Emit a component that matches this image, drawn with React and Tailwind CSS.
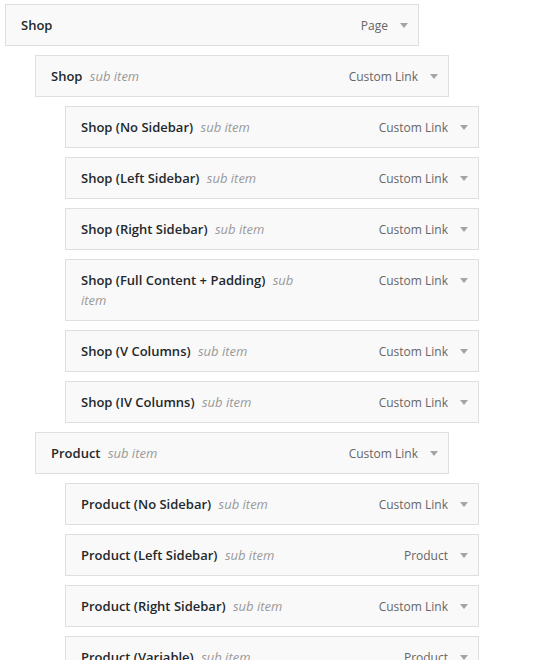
const items = [
  { title: "Shop", type: "Page", depth: 0, sub: false },
  { title: "Shop", type: "Custom Link", depth: 1, sub: true },
  { title: "Shop (No Sidebar)", type: "Custom Link", depth: 2, sub: true },
  { title: "Shop (Left Sidebar)", type: "Custom Link", depth: 2, sub: true },
  { title: "Shop (Right Sidebar)", type: "Custom Link", depth: 2, sub: true },
  { title: "Shop (Full Content + Padding)", type: "Custom Link", depth: 2, sub: true },
  { title: "Shop (V Columns)", type: "Custom Link", depth: 2, sub: true },
  { title: "Shop (IV Columns)", type: "Custom Link", depth: 2, sub: true },
  { title: "Product", type: "Custom Link", depth: 1, sub: true },
  { title: "Product (No Sidebar)", type: "Custom Link", depth: 2, sub: true },
  { title: "Product (Left Sidebar)", type: "Product", depth: 2, sub: true },
  { title: "Product (Right Sidebar)", type: "Custom Link", depth: 2, sub: true },
  { title: "Product (Variable)", type: "Product", depth: 2, sub: true },
];

const indent = ["ml-[5px]", "ml-[35px]", "ml-[65px]"];

function Arrow() {
  return (
    <svg width="8" height="5" viewBox="0 0 8 5" className="mt-[8px] shrink-0">
      <path d="M0 0 H8 L4 5 Z" fill="#a0a5aa" />
    </svg>
  );
}

function MenuItem({ item }) {
  return (
    <div
      className={`${indent[item.depth]} mt-[9px] first:mt-0 w-[414px] border border-[#dfdfdf] bg-[#f9f9f9] pl-[15px] pr-[10px] py-[10px] flex items-start`}
    >
      <div className="w-[213px] text-[13px] leading-[20px] font-semibold text-[#23282d]">
        {item.title}
        {item.sub && (
          <>
            {" "}
            <span className="ml-1 italic font-normal text-[#999]">sub item</span>
          </>
        )}
      </div>
      <div className="ml-auto flex items-start gap-[12px]">
        <span className="pt-[2px] text-[12px] leading-[18px] text-[#666]">{item.type}</span>
        <Arrow />
      </div>
    </div>
  );
}

export default function App() {
  return (
    <div
      className="h-[660px] overflow-hidden bg-white pt-[4px]"
      style={{ fontFamily: '"Open Sans", "Noto Sans", sans-serif' }}
    >
      {items.map((item, i) => (
        <MenuItem key={i} item={item} />
      ))}
    </div>
  );
}
